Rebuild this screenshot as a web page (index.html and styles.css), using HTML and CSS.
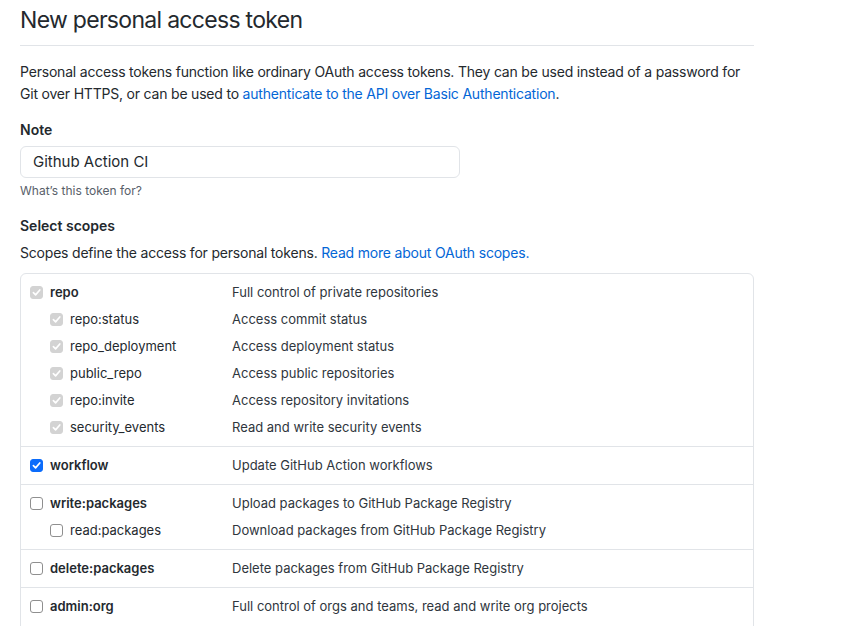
FILE: index.html
```html
<!DOCTYPE html>
<html lang="en">
<head>
<meta charset="utf-8">
<title>New personal access token</title>
<link rel="stylesheet" href="styles.css">
</head>
<body>
<div class="page">
  <h1 class="title">New personal access token</h1>
  <p class="intro">Personal access tokens function like ordinary OAuth access tokens. They can be used instead of a password for Git over HTTPS, or can be used to <a href="#">authenticate to the API over Basic Authentication</a>.</p>

  <div class="field note-field">
    <label class="field-label">Note</label>
    <div class="input">Github Action CI</div>
    <p class="hint">What’s this token for?</p>
  </div>

  <div class="field scopes-field">
    <div class="field-label">Select scopes</div>
    <p class="scopes-desc">Scopes define the access for personal tokens. <a href="#">Read more about OAuth scopes.</a></p>
  </div>

  <div class="scopes">
    <div class="group">
      <div class="row"><span class="cb disabled"><svg viewBox="0 0 12 12"><path d="M2.6 6.2 L5 8.6 L9.6 3.2" /></svg></span><span class="name top">repo</span><span class="desc">Full control of private repositories</span></div>
      <div class="row sub"><span class="cb disabled"><svg viewBox="0 0 12 12"><path d="M2.6 6.2 L5 8.6 L9.6 3.2" /></svg></span><span class="name">repo:status</span><span class="desc">Access commit status</span></div>
      <div class="row sub"><span class="cb disabled"><svg viewBox="0 0 12 12"><path d="M2.6 6.2 L5 8.6 L9.6 3.2" /></svg></span><span class="name">repo_deployment</span><span class="desc">Access deployment status</span></div>
      <div class="row sub"><span class="cb disabled"><svg viewBox="0 0 12 12"><path d="M2.6 6.2 L5 8.6 L9.6 3.2" /></svg></span><span class="name">public_repo</span><span class="desc">Access public repositories</span></div>
      <div class="row sub"><span class="cb disabled"><svg viewBox="0 0 12 12"><path d="M2.6 6.2 L5 8.6 L9.6 3.2" /></svg></span><span class="name">repo:invite</span><span class="desc">Access repository invitations</span></div>
      <div class="row sub"><span class="cb disabled"><svg viewBox="0 0 12 12"><path d="M2.6 6.2 L5 8.6 L9.6 3.2" /></svg></span><span class="name">security_events</span><span class="desc">Read and write security events</span></div>
    </div>
    <div class="group">
      <div class="row"><span class="cb checked"><svg viewBox="0 0 12 12"><path d="M2.6 6.2 L5 8.6 L9.6 3.2" /></svg></span><span class="name top">workflow</span><span class="desc">Update GitHub Action workflows</span></div>
    </div>
    <div class="group">
      <div class="row"><span class="cb"></span><span class="name top">write:packages</span><span class="desc">Upload packages to GitHub Package Registry</span></div>
      <div class="row sub"><span class="cb"></span><span class="name">read:packages</span><span class="desc">Download packages from GitHub Package Registry</span></div>
    </div>
    <div class="group">
      <div class="row"><span class="cb"></span><span class="name top">delete:packages</span><span class="desc">Delete packages from GitHub Package Registry</span></div>
    </div>
    <div class="group">
      <div class="row"><span class="cb"></span><span class="name top">admin:org</span><span class="desc">Full control of orgs and teams, read and write org projects</span></div>
      <div class="row sub"><span class="cb"></span><span class="name">write:org</span><span class="desc">Read and write org and team membership, read and write org projects</span></div>
    </div>
  </div>
</div>
</body>
</html>
```

FILE: styles.css
```css
* { box-sizing: border-box; }
html, body { margin: 0; padding: 0; background: #fff; }
body {
  font-family: Inter, "Liberation Sans", Arial, sans-serif;
  font-size: 14px;
  line-height: 1.5;
  color: #24292e;
  overflow: hidden;
}
a { color: #0366d6; text-decoration: none; }
.page {
  width: 754px;
  padding-left: 20px;
}
.title {
  margin: 0;
  padding: 5px 0 10px;
  font-size: 23px;
  font-weight: 400;
  letter-spacing: -0.7px;
  line-height: 30px;
  border-bottom: 1px solid #e1e4e8;
}
.intro {
  margin: 15px 0 0;
  line-height: 22px;
  letter-spacing: -0.2px;
}
.note-field { margin-top: 14px; }
.scopes-field { margin-top: 15px; }
.field-label {
  display: block;
  font-weight: 600;
  line-height: 21px;
}
.input {
  margin-top: 6px;
  width: 440px;
  height: 32px;
  padding: 5px 12px;
  font-size: 15px;
  line-height: 20px;
  border: 1px solid #e1e4e8;
  border-radius: 6px;
  color: #24292e;
}
.hint {
  margin: 4px 0 0;
  font-size: 12px;
  line-height: 18px;
  color: #586069;
}
.scopes-desc {
  margin: 6px 0 0;
  line-height: 21px;
  letter-spacing: -0.2px;
}
.scopes {
  margin-top: 10px;
  border: 1px solid #e1e4e8;
  border-radius: 6px;
}
.group {
  padding: 5px 9px;
  border-top: 1px solid #e1e4e8;
}
.group:first-child { border-top: 0; }
.row {
  display: flex;
  align-items: center;
  height: 27px;
  font-size: 13px;
}
.row .cb { margin-right: 7px; }
.row.sub { padding-left: 20px; }
.name { width: 182px; flex: none; }
.row.sub .name { width: 162px; }
.name.top { font-weight: 600; }
.desc { white-space: nowrap; color: #2f363d; }
.cb {
  flex: none;
  width: 13px;
  height: 13px;
  border: 1px solid #8f8f8f;
  border-radius: 3px;
  background: #fff;
  display: inline-flex;
  align-items: center;
  justify-content: center;
}
.cb svg { width: 11px; height: 11px; display: block; }
.cb svg path {
  fill: none;
  stroke: #fff;
  stroke-width: 1.8;
  stroke-linecap: round;
  stroke-linejoin: round;
}
.cb.disabled {
  background: #d3d3d3;
  border-color: #d3d3d3;
}
.cb.checked {
  background: #0b6cfb;
  border-color: #0b6cfb;
}
```
